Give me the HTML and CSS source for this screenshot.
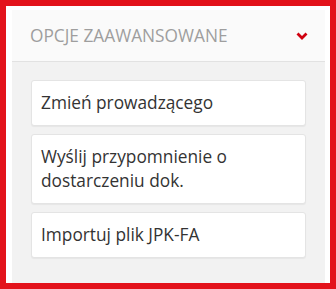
FILE: index.html
```html
<!DOCTYPE html>
<html lang="pl">
<head>
    <meta charset="UTF-8">
    <title>Opcje zaawansowane</title>
    <link rel="stylesheet" href="styles.css">
</head>
<body>
    <div class="frame">
        <div class="panel">
            <div class="panel-header">
                <span class="panel-title">Opcje zaawansowane</span>
                <svg class="chevron" width="12" height="8" viewBox="0 0 12 8">
                    <polyline points="1.5,1.5 6,6 10.5,1.5" fill="none" stroke="#d0000f" stroke-width="2.8"/>
                </svg>
            </div>
            <div class="panel-body">
                <div class="option">Zmień prowadzącego</div>
                <div class="option">Wyślij przypomnienie o dostarczeniu dok.</div>
                <div class="option">Importuj plik JPK-FA</div>
            </div>
        </div>
    </div>
</body>
</html>
```

FILE: styles.css
```css
html, body {
    margin: 0;
    padding: 0;
}

body {
    font-family: "Open Sans", "Noto Sans", sans-serif;
    background: #fff;
}

.frame {
    box-sizing: border-box;
    width: 336px;
    height: 289px;
    border: 6px solid #e3131b;
    padding: 4px 5px 0 6px;
    overflow: hidden;
}

.panel {
    background: #f2f2f2;
    height: 300px;
}

.panel-header {
    display: flex;
    align-items: center;
    justify-content: space-between;
    height: 51px;
    padding: 0 17px 0 18px;
    background: #fafafa;
    border-bottom: 1px solid #e2e2e2;
}

.panel-title {
    text-transform: uppercase;
    color: #9e9e9e;
    font-size: 17.3px;
}

.chevron {
    display: block;
}

.panel-body {
    display: flex;
    flex-direction: column;
    gap: 8px;
    padding: 18px 19px;
}

.option {
    background: #fff;
    border: 1px solid #e4e4e4;
    border-radius: 3px;
    box-shadow: 0 1px 1px rgba(0, 0, 0, 0.05);
    padding: 10px 9px;
    color: #333;
    font-size: 17.3px;
    line-height: 24px;
}
```
